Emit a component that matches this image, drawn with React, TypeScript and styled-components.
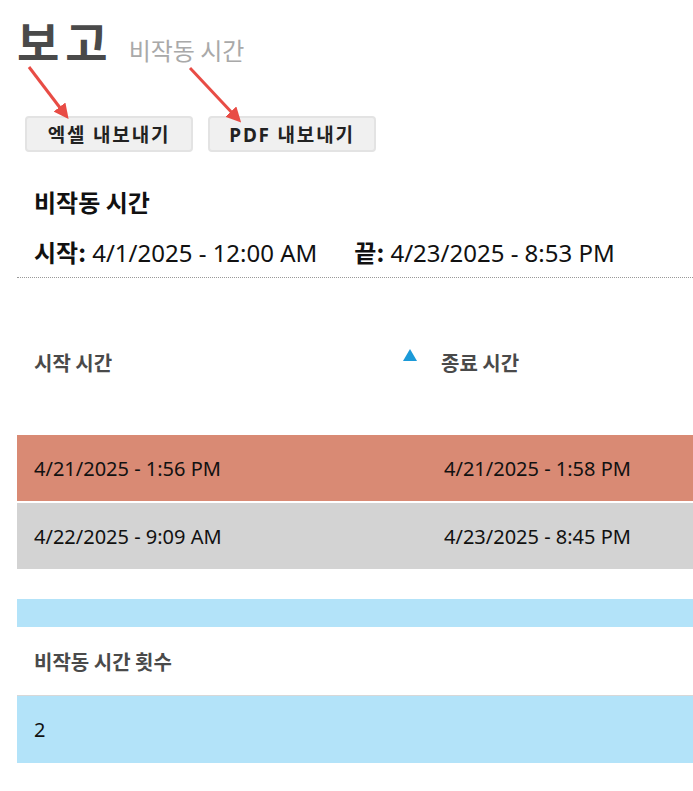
import styled, { createGlobalStyle } from "styled-components";

const GlobalStyle = createGlobalStyle`
  body {
    margin: 0;
    background: #fff;
    font-family: "Noto Sans", "Noto Sans CJK KR", sans-serif;
    color: #111;
  }
`

const Page = styled.main`
  position: relative;
  width: 693px;
  height: 791px;
  overflow: hidden;
  padding-left: 17px;
  box-sizing: border-box;
`

const TitleRow = styled.div`
  display: flex;
  align-items: baseline;
  gap: 15px;
  padding-top: 13px;
  height: 57px;
`

const Title = styled.h1`
  margin: 0;
  font-family: "Noto Sans CJK KR", sans-serif;
  font-size: 46px;
  font-weight: 700;
  line-height: 54px;
  letter-spacing: 6px;
  color: #4a4a4a;
`

const Subtitle = styled.span`
  font-family: "Noto Sans CJK KR", sans-serif;
  font-size: 24px;
  color: #a9a9a9;
`

const ButtonRow = styled.div`
  display: flex;
  gap: 15px;
  margin-top: 46px;
  padding-left: 8px;
`

const ExportButton = styled.button`
  height: 36px;
  width: 168px;
  background: #f0f0f0;
  border: 2px solid #e3e3e3;
  border-radius: 4px;
  font-family: "Noto Sans", "Noto Sans CJK KR", sans-serif;
  font-size: 19px;
  font-weight: 700;
  letter-spacing: 1.8px;
  color: #222;
  padding: 0;
`

const Summary = styled.section`
  margin-top: 33px;
  padding: 0 17px;
  height: 93px;
  border-bottom: 1px dotted #999;
  box-sizing: border-box;
`

const SummaryHeading = styled.h2`
  margin: 0;
  font-family: "Noto Sans CJK KR", sans-serif;
  font-size: 24px;
  font-weight: 700;
  line-height: 34px;
  color: #111;
`

const RangeLine = styled.div`
  display: flex;
  gap: 37px;
  margin-top: 18px;
  font-size: 24px;
  line-height: 30px;
`

const RangeLabel = styled.b`
  font-family: "Noto Sans CJK KR", sans-serif;
  font-weight: 700;
`

const Grid = styled.div`
  display: grid;
  grid-template-columns: 410px 1fr;
`

const HeadCell = styled.div`
  display: flex;
  align-items: center;
  gap: 24px;
  height: 157px;
  padding: 12px 17px 0;
  box-sizing: border-box;
  font-family: "Noto Sans CJK KR", sans-serif;
  font-size: 20px;
  font-weight: 700;
  color: #4a4a4a;
`

const SortArrow = styled.span`
  width: 0;
  height: 0;
  margin-left: -41px;
  margin-top: -16px;
  border-left: 7.5px solid transparent;
  border-right: 7.5px solid transparent;
  border-bottom: 12px solid #1b9ad8;
`

const Row = styled.div<{ $bg: string }>`
  display: contents;

  & > div {
    background: ${(p) => p.$bg};
  }
`

const Cell = styled.div`
  display: flex;
  align-items: center;
  height: 66px;
  padding: 0 17px;
  margin-bottom: 2px;
  font-size: 20px;
  color: #111;
`

const BlueBar = styled.div`
  height: 28px;
  margin-top: 28px;
  background: #b3e3f9;
`

const CountHead = styled.div`
  display: flex;
  align-items: center;
  height: 68px;
  padding: 0 17px;
  font-family: "Noto Sans CJK KR", sans-serif;
  font-size: 20px;
  font-weight: 700;
  color: #4a4a4a;
`

const CountCell = styled.div`
  display: flex;
  align-items: center;
  height: 67px;
  padding: 0 17px;
  border-top: 1px solid #d8d8d8;
  background: #b3e3f9;
  font-size: 20px;
`

const Annotations = styled.svg`
  position: absolute;
  left: 0;
  top: 0;
  pointer-events: none;
`

const rows = [
  { start: "4/21/2025 - 1:56 PM", end: "4/21/2025 - 1:58 PM", bg: "#d98a74" },
  { start: "4/22/2025 - 9:09 AM", end: "4/23/2025 - 8:45 PM", bg: "#d3d3d3" },
]

export default function App() {
  return (
    <Page>
      <GlobalStyle />
      <TitleRow>
        <Title>보고</Title>
        <Subtitle>비작동 시간</Subtitle>
      </TitleRow>

      <ButtonRow>
        <ExportButton>엑셀 내보내기</ExportButton>
        <ExportButton>PDF 내보내기</ExportButton>
      </ButtonRow>

      <Summary>
        <SummaryHeading>비작동 시간</SummaryHeading>
        <RangeLine>
          <span><RangeLabel>시작:</RangeLabel> 4/1/2025 - 12:00 AM</span>
          <span><RangeLabel>끝:</RangeLabel> 4/23/2025 - 8:53 PM</span>
        </RangeLine>
      </Summary>

      <Grid>
        <HeadCell>시작 시간</HeadCell>
        <HeadCell>
          <SortArrow />
          종료 시간
        </HeadCell>
        {rows.map((r) => (
          <Row key={r.start} $bg={r.bg}>
            <Cell>{r.start}</Cell>
            <Cell>{r.end}</Cell>
          </Row>
        ))}
      </Grid>

      <BlueBar />
      <CountHead>비작동 시간 횟수</CountHead>
      <CountCell>2</CountCell>

      <Annotations width="693" height="791">
        <defs>
          <marker id="head" markerWidth="5" markerHeight="5" refX="2.5" refY="2.5" orient="auto">
            <path d="M0,0 L5,2.5 L0,5 z" fill="#e84c45" />
          </marker>
        </defs>
        <line x1="29" y1="67" x2="64" y2="113" stroke="#e84c45" strokeWidth="3" markerEnd="url(#head)" />
        <line x1="190" y1="68" x2="236" y2="117" stroke="#e84c45" strokeWidth="3" markerEnd="url(#head)" />
      </Annotations>
    </Page>
  )
}
